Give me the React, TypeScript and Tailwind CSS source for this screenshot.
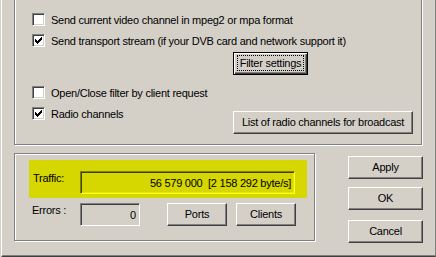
import React from 'react'

const font = { fontFamily: '"Liberation Sans", Arial, sans-serif' }

function Check() {
  // classic 7x7 check mark, 3px thick columns
  const cols = [2, 3, 4, 3, 2, 1, 0]
  return (
    <svg width="7" height="7" viewBox="0 0 7 7" shapeRendering="crispEdges" className="block">
      {cols.map((y, x) => (
        <rect key={x} x={x} y={y} width="1" height="3" fill="#000" />
      ))}
    </svg>
  )
}

function CheckRow({ label, checked, className = '' }: { label: string; checked?: boolean; className?: string }) {
  return (
    <div className={`flex items-start h-[13px] ${className}`}>
      <div className="w-[13px] h-[13px] shrink-0 bg-white border border-t-[#808080] border-l-[#808080] border-b-white border-r-white shadow-[inset_1px_1px_0_#404040,inset_-1px_-1px_0_#d4d0c8] flex items-center justify-center">
        {checked && <Check />}
      </div>
      <span className="ml-[6px] pt-[1px] text-[11px] leading-[13px] tracking-[-0.25px] text-black whitespace-nowrap">{label}</span>
    </div>
  )
}

function Button({ label, className = '' }: { label: string; className?: string }) {
  return (
    <div
      className={`h-[23px] shrink-0 bg-[#d4d0c8] border border-t-white border-l-white border-r-[#404040] border-b-[#404040] shadow-[inset_-1px_-1px_0_#808080] flex items-center justify-center text-[11px] leading-[13px] tracking-[-0.25px] text-black whitespace-nowrap ${className}`}
    >
      {label}
    </div>
  )
}

export default function App() {
  return (
    <div className="w-[436px] h-[257px] bg-[#d4d0c8] overflow-hidden" style={font}>
      {/* tab page */}
      <div className="ml-[1px] w-[435px] h-[257px] flex flex-col overflow-hidden border-l border-l-white border-r border-r-[#808080] border-b border-b-[#404040] shadow-[inset_0_-1px_0_#808080]">
        {/* upper group box, top edge cut off */}
        <div className="ml-[12px] mt-[-10px] w-[408px] h-[155px] shrink-0 border border-[#808080] shadow-[1px_1px_0_#fff,inset_1px_1px_0_#fff] pt-[22px] pl-[17px]">
          <CheckRow label="Send current video channel in mpeg2 or mpa format" />
          <CheckRow className="mt-[8px]" label="Send transport stream (if your DVB card and network support it)" checked />
          <div className="mt-[5px] ml-[201px] w-[75px] h-[23px] relative bg-[#d4d0c8] border border-black shadow-[inset_1px_1px_0_#fff,inset_-1px_-1px_0_#404040,inset_-2px_-2px_0_#808080] flex items-center justify-center text-[11px] leading-[13px] tracking-[-0.25px] text-black">
            Filter settings
            <div className="absolute left-[3px] right-[3px] top-[2px] bottom-[3px] border border-dotted border-black" />
          </div>
          <CheckRow className="mt-[11px]" label="Open/Close filter by client request" />
          <div className="mt-[8px] flex items-start">
            <div className="w-[201px] shrink-0">
              <CheckRow label="Radio channels" checked />
            </div>
            <Button className="mt-[4px] w-[180px]" label="List of radio channels for broadcast" />
          </div>
        </div>

        {/* lower row */}
        <div className="mt-[8px] flex items-start">
          <div className="ml-[12px] w-[301px] h-[88px] shrink-0 border border-[#808080] shadow-[1px_1px_0_#fff,inset_1px_1px_0_#fff]">
            <div className="ml-[14px] mt-[6px] w-[278px] h-[38px] bg-[#d6d600] flex items-start">
              <span className="ml-[4px] mt-[12px] w-[47px] text-[11px] leading-[13px] tracking-[-0.25px] text-black">Traffic:</span>
              <div className="mt-[11px] w-[215px] h-[23px] border border-t-[#808000] border-l-[#808000] border-b-[#ffff20] border-r-[#ffff20] shadow-[inset_1px_1px_0_#404000,inset_-1px_-1px_0_#e8e800] flex items-center justify-end pr-[3px] pt-[1px] text-[11px] leading-[13px] tracking-[-0.25px] text-black whitespace-pre">
                56 579 000  [2 158 292 byte/s]
              </div>
            </div>
            <div className="mt-[5px] ml-[17px] flex items-start">
              <span className="w-[48px] pt-[1px] text-[11px] leading-[13px] tracking-[-0.25px] text-black">Errors :</span>
              <div className="w-[60px] h-[23px] border border-t-[#808080] border-l-[#808080] border-b-white border-r-white shadow-[inset_1px_1px_0_#404040,inset_-1px_-1px_0_#d4d0c8] flex items-center justify-end pr-[3px] pt-[1px] text-[11px] leading-[13px] text-black">
                0
              </div>
              <Button className="ml-[27px] w-[60px]" label="Ports" />
              <Button className="ml-[9px] w-[60px]" label="Clients" />
            </div>
          </div>

          <div className="ml-[33px] mt-[3px] flex flex-col">
            <Button className="w-[75px]" label="Apply" />
            <Button className="mt-[8px] w-[75px]" label="OK" />
            <Button className="mt-[10px] w-[75px]" label="Cancel" />
          </div>
        </div>
      </div>
    </div>
  )
}
